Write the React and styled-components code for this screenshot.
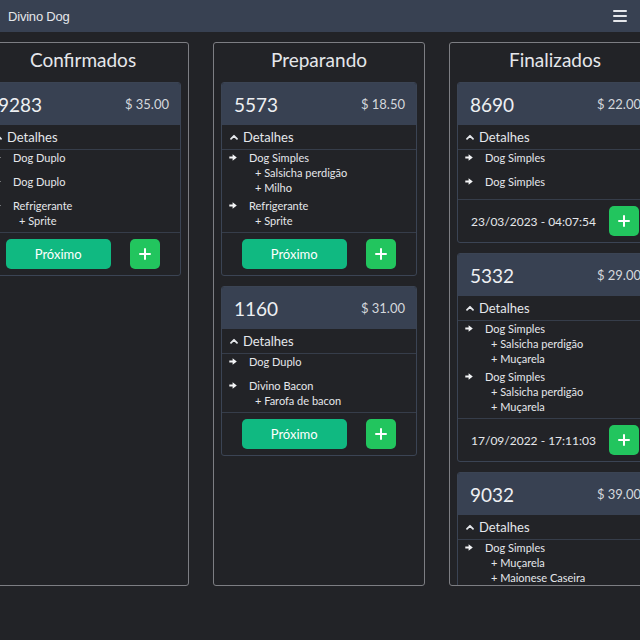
import React from "react";
import styled, { createGlobalStyle } from "styled-components";

const Global = createGlobalStyle`
  html, body { margin: 0; padding: 0; background: #222327; }
  body { font-family: Lato, "Noto Sans", sans-serif; color: #e5e7eb; overflow: hidden; }
  * { box-sizing: border-box; }
`;

const Page = styled.div`
  width: 640px;
  height: 640px;
  background: #222327;
  overflow: hidden;
`;

const NavBar = styled.nav`
  height: 32px;
  background: #384152;
  display: flex;
  align-items: center;
  justify-content: space-between;
  padding: 0 13px 0 8px;
`;

const Brand = styled.span`
  font-family: "Liberation Sans", Arial, sans-serif;
  font-size: 13px;
  color: #e5e7eb;
  letter-spacing: -0.2px;
`;

const Burger = styled.button`
  width: 14px;
  height: 12px;
  padding: 0;
  border: none;
  background: none;
  display: flex;
  flex-direction: column;
  justify-content: space-between;
  span {
    display: block;
    height: 2px;
    background: #e5e7eb;
    border-radius: 1px;
  }
`;

const Board = styled.main`
  display: flex;
  justify-content: center;
  gap: 24px;
  padding: 10px 2px 0 0;
  overflow: hidden;
`;

const Column = styled.section`
  flex: 0 0 212px;
  height: 544px;
  border: 1px solid #7d7e83;
  border-radius: 3px;
  padding: 0 7px;
  overflow: hidden;
  display: flex;
  flex-direction: column;
`;

const ColumnTitle = styled.h2`
  margin: 0;
  height: 39px;
  line-height: 34px;
  text-align: center;
  font-size: 19px;
  font-weight: 400;
  color: #e5e7eb;
  flex: none;
`;

const Cards = styled.div`
  display: flex;
  flex-direction: column;
  gap: 10px;
`;

const Card = styled.article`
  border: 1px solid #3b4454;
  border-radius: 3px;
  overflow: hidden;
  flex: none;
`;

const CardHead = styled.header`
  height: 42px;
  background: #384152;
  display: flex;
  align-items: center;
  justify-content: space-between;
  padding: 0 11px 0 12px;
`;

const OrderNo = styled.span`
  font-size: 19px;
  color: #eef0f3;
`;

const Price = styled.span`
  font-size: 13px;
  color: #d4d7dc;
`;

const DetailsToggle = styled.div`
  height: 25px;
  border-bottom: 1px solid #363d4a;
  display: flex;
  align-items: center;
  gap: 5px;
  padding-left: 8px;
  font-size: 13px;
  color: #e5e7eb;
`;

const ItemList = styled.ul`
  list-style: none;
  margin: 0;
  padding: 0 0 1px 7px;
`;

const Item = styled.li`
  display: grid;
  grid-template-columns: 8px 1fr;
  column-gap: 12px;
  padding-bottom: 3px;
  font-size: 11px;
  line-height: 15px;
  color: #e5e7eb;
`;

const Bullet = styled.svg`
  margin-top: 4px;
`;

const SubList = styled.ul`
  list-style: none;
  margin: 0;
  padding: 0 0 0 6px;
  min-height: 6px;
  grid-column: 2;
`;

const SubItem = styled.li`
  font-size: 11px;
  line-height: 15px;
  color: #e5e7eb;
`;

const CardFoot = styled.footer`
  border-top: 1px solid #363d4a;
  padding: 6px 0;
  display: flex;
  align-items: center;
  justify-content: space-evenly;
`;

const NextButton = styled.button`
  width: 105px;
  height: 30px;
  border: none;
  border-radius: 5px;
  background: #10b981;
  color: #ffffff;
  font-family: Lato, "Noto Sans", sans-serif;
  font-size: 13px;
`;

const PlusButton = styled.button`
  width: 30px;
  height: 30px;
  border: none;
  border-radius: 5px;
  background: #22c55e;
  display: flex;
  align-items: center;
  justify-content: center;
  padding: 0;
`;

const DateText = styled.span`
  font-size: 12px;
  color: #e5e7eb;
`;

const Chevron = () => (
  <svg width="8" height="6" viewBox="0 0 8 6">
    <path d="M1 4.8 L4 1.8 L7 4.8" fill="none" stroke="#e5e7eb" strokeWidth="1.8" strokeLinecap="round" strokeLinejoin="round" />
  </svg>
);

const Arrow = () => (
  <Bullet width="8" height="7" viewBox="0 0 8 7">
    <path d="M0.3 2.4 H3.6 V0.3 L7.8 3.5 L3.6 6.7 V4.6 H0.3 Z" fill="#f3f4f6" />
  </Bullet>
);

const Plus = () => (
  <svg width="12" height="12" viewBox="0 0 12 12">
    <path d="M6 1 V11 M1 6 H11" stroke="#ffffff" strokeWidth="2" strokeLinecap="round" />
  </svg>
);

const columns = [
  {
    title: "Confirmados",
    orders: [
      {
        id: "9283",
        price: "35.00",
        items: [
          { name: "Dog Duplo", subs: [] },
          { name: "Dog Duplo", subs: [] },
          { name: "Refrigerante", subs: ["Sprite"] },
        ],
      },
    ],
  },
  {
    title: "Preparando",
    orders: [
      {
        id: "5573",
        price: "18.50",
        items: [
          { name: "Dog Simples", subs: ["Salsicha perdigão", "Milho"] },
          { name: "Refrigerante", subs: ["Sprite"] },
        ],
      },
      {
        id: "1160",
        price: "31.00",
        items: [
          { name: "Dog Duplo", subs: [] },
          { name: "Divino Bacon", subs: ["Farofa de bacon"] },
        ],
      },
    ],
  },
  {
    title: "Finalizados",
    orders: [
      {
        id: "8690",
        price: "22.00",
        date: "23/03/2023 - 04:07:54",
        items: [
          { name: "Dog Simples", subs: [] },
          { name: "Dog Simples", subs: [] },
        ],
      },
      {
        id: "5332",
        price: "29.00",
        date: "17/09/2022 - 17:11:03",
        items: [
          { name: "Dog Simples", subs: ["Salsicha perdigão", "Muçarela"] },
          { name: "Dog Simples", subs: ["Salsicha perdigão", "Muçarela"] },
        ],
      },
      {
        id: "9032",
        price: "39.00",
        date: "05/01/2023 - 12:30:10",
        items: [
          { name: "Dog Simples", subs: ["Muçarela", "Maionese Caseira", "Batata palha"] },
        ],
      },
    ],
  },
];

const OrderCard = ({ order }) => (
  <Card>
    <CardHead>
      <OrderNo>{order.id}</OrderNo>
      <Price>$ {order.price}</Price>
    </CardHead>
    <DetailsToggle>
      <Chevron />
      Detalhes
    </DetailsToggle>
    <ItemList>
      {order.items.map((it, i) => (
        <Item key={i}>
          <Arrow />
          <span>{it.name}</span>
          <SubList>
            {it.subs.map((s, j) => (
              <SubItem key={j}>+ {s}</SubItem>
            ))}
          </SubList>
        </Item>
      ))}
    </ItemList>
    <CardFoot>
      {order.date ? <DateText>{order.date}</DateText> : <NextButton>Próximo</NextButton>}
      <PlusButton>
        <Plus />
      </PlusButton>
    </CardFoot>
  </Card>
);

export default function App() {
  return (
    <Page>
      <Global />
      <NavBar>
        <Brand>Divino Dog</Brand>
        <Burger aria-label="menu">
          <span />
          <span />
          <span />
        </Burger>
      </NavBar>
      <Board>
        {columns.map((col) => (
          <Column key={col.title}>
            <ColumnTitle>{col.title}</ColumnTitle>
            <Cards>
              {col.orders.map((o) => (
                <OrderCard key={o.id} order={o} />
              ))}
            </Cards>
          </Column>
        ))}
      </Board>
    </Page>
  );
}
